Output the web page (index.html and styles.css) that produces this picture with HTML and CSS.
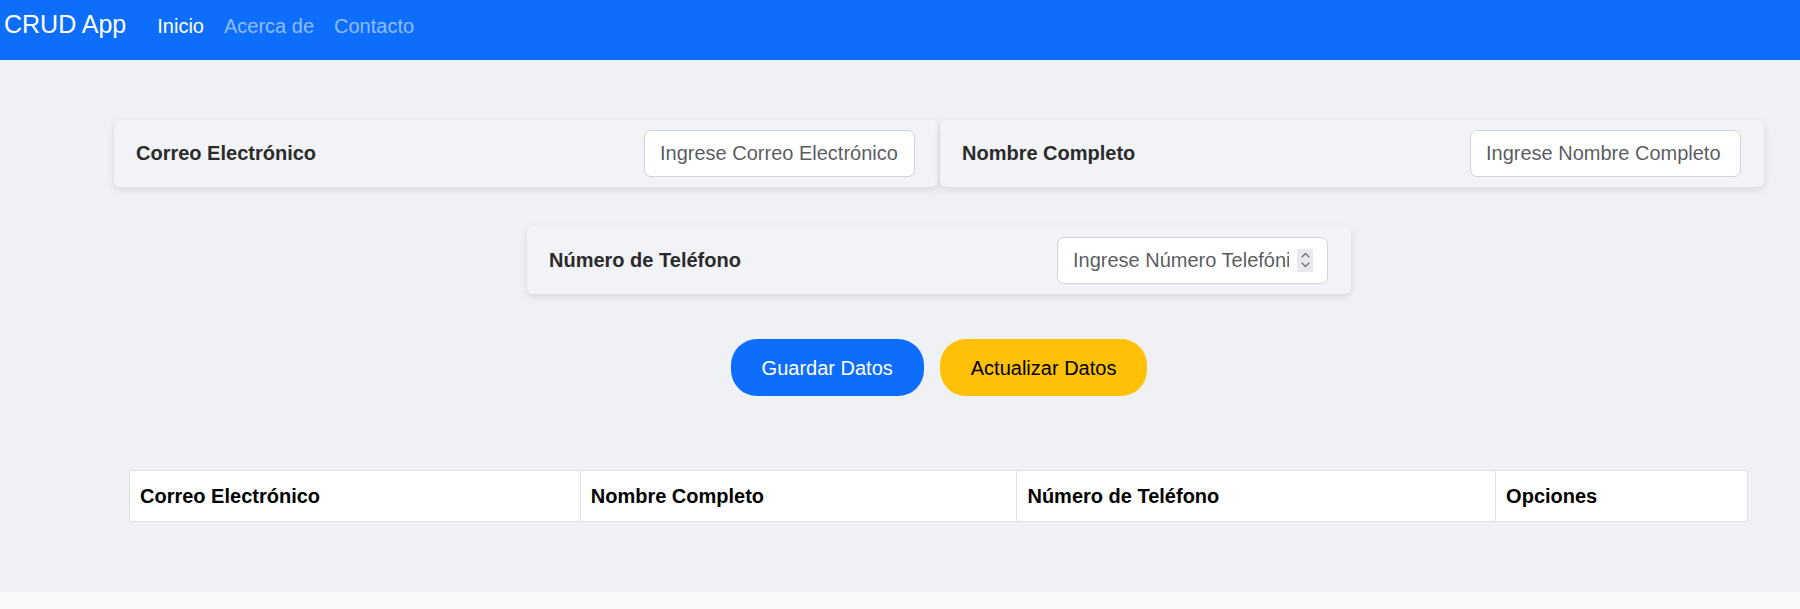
FILE: index.html
```html
<!DOCTYPE html>
<html lang="es">
<head>
<meta charset="utf-8">
<title>CRUD App</title>
<link rel="stylesheet" href="styles.css">
</head>
<body>
<nav class="navbar">
  <span class="brand">CRUD App</span>
  <a class="nav-link active" href="#">Inicio</a>
  <a class="nav-link" href="#">Acerca de</a>
  <a class="nav-link" href="#">Contacto</a>
</nav>
<main class="main">
  <div class="wrapper">
    <div class="card-row">
      <div class="card">
        <label class="card-label">Correo Electrónico</label>
        <input class="field-input" type="email" placeholder="Ingrese Correo Electrónico">
      </div>
      <div class="card">
        <label class="card-label">Nombre Completo</label>
        <input class="field-input" type="text" placeholder="Ingrese Nombre Completo">
      </div>
    </div>
    <div class="card card-single">
      <label class="card-label">Número de Teléfono</label>
      <div class="number-wrap">
        <input class="field-input field-number" type="number" placeholder="Ingrese Número Telefónico">
        <span class="spinner" aria-hidden="true">
          <svg width="11" height="18" viewBox="0 0 11 18">
            <path d="M2 6 L5.5 2.5 L9 6" fill="none" stroke="#6d6d6d" stroke-width="1.2" stroke-linecap="round" stroke-linejoin="round"/>
            <path d="M2 12 L5.5 15.5 L9 12" fill="none" stroke="#6d6d6d" stroke-width="1.2" stroke-linecap="round" stroke-linejoin="round"/>
          </svg>
        </span>
      </div>
    </div>
    <div class="actions">
      <button class="btn btn-primary" type="button">Guardar Datos</button>
      <button class="btn btn-warning" type="button">Actualizar Datos</button>
    </div>
    <table class="data-table">
      <thead>
        <tr>
          <th class="col-1">Correo Electrónico</th>
          <th class="col-2">Nombre Completo</th>
          <th class="col-3">Número de Teléfono</th>
          <th class="col-4">Opciones</th>
        </tr>
      </thead>
      <tbody></tbody>
    </table>
  </div>
</main>
</body>
</html>
```
FILE: styles.css
```css
* {
  box-sizing: border-box;
}

body {
  margin: 0;
  background: #f8f9fa;
  font-family: "Liberation Sans", Arial, sans-serif;
  color: #212529;
}

.navbar {
  height: 60px;
  background: #0d6efd;
  display: flex;
  align-items: baseline;
  padding: 6px 0 0 4px;
}

.brand {
  font-size: 25px;
  line-height: 37.5px;
  color: #fff;
  margin-right: 21px;
}

.nav-link {
  font-size: 20px;
  line-height: 30px;
  padding: 0 10px;
  color: rgba(255, 255, 255, 0.55);
  text-decoration: none;
}

.nav-link.active {
  color: #fff;
}

.main {
  background: #f0f1f5;
  padding: 60px 36px 70px 114px;
}

.wrapper {
  display: flex;
  flex-direction: column;
}

.card-row {
  display: grid;
  grid-template-columns: 824px 824px;
  gap: 2px;
}

.card {
  height: 67px;
  display: flex;
  align-items: center;
  justify-content: space-between;
  padding: 0 23px 0 22px;
  background: #f2f3f6;
  border-radius: 6px;
  box-shadow: 0 3px 8px rgba(0, 0, 0, 0.1);
}

.card-single {
  width: 824px;
  align-self: center;
  margin-top: 39px;
  height: 68px;
}

.card-label {
  font-size: 20px;
  font-weight: bold;
  color: #2b2b2b;
}

.field-input {
  width: 271px;
  height: 47px;
  padding: 7.5px 15px;
  font-family: "Liberation Sans", Arial, sans-serif;
  font-size: 20px;
  line-height: 30px;
  color: #212529;
  background: #fff;
  border: 1px solid #ced4da;
  border-radius: 7px;
  outline: none;
}

.field-input::placeholder {
  color: rgba(33, 37, 41, 0.75);
}

.number-wrap {
  position: relative;
  display: flex;
}

.field-number {
  padding-right: 38px;
  -moz-appearance: textfield;
}

.field-number::-webkit-inner-spin-button,
.field-number::-webkit-outer-spin-button {
  -webkit-appearance: none;
  margin: 0;
}

.spinner {
  position: absolute;
  right: 15px;
  top: 12px;
  width: 16px;
  height: 23px;
  background: #e9e9ed;
  display: flex;
  align-items: center;
  justify-content: center;
}

.actions {
  display: flex;
  justify-content: center;
  gap: 16px;
  margin-top: 45px;
}

.btn {
  font-family: "Liberation Sans", Arial, sans-serif;
  font-size: 20px;
  line-height: 30px;
  padding: 13.5px 31px;
  border: none;
  border-radius: 26px;
  cursor: pointer;
}

.btn-primary {
  background: #0d6efd;
  color: #fff;
}

.btn-warning {
  background: #ffc107;
  color: #000;
}

.data-table {
  margin-top: 74px;
  margin-left: 15px;
  width: 1619px;
  border-collapse: collapse;
  background: #fff;
}

.data-table th {
  text-align: left;
  font-size: 20px;
  line-height: 30px;
  font-weight: bold;
  color: #000;
  padding: 10px 10px;
  border: 1px solid #dee2e6;
}

.col-1 { width: 451px; }
.col-2 { width: 437px; }
.col-3 { width: 479px; }
.col-4 { width: 252px; }
```
